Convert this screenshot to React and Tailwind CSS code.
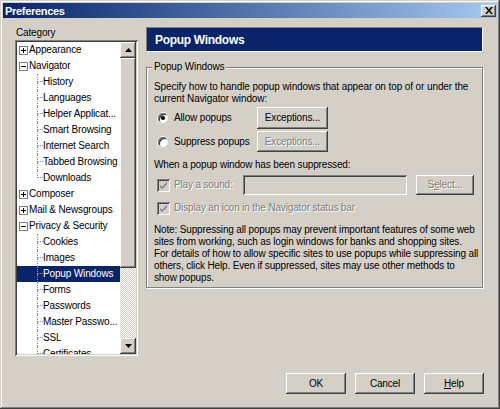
import React from 'react';

const raised =
  'bg-[#d4d0c8] shadow-[inset_-1px_-1px_#404040,inset_1px_1px_#ffffff,inset_-2px_-2px_#808080,inset_2px_2px_#d4d0c8]';
const sunken =
  'shadow-[inset_1px_1px_#808080,inset_-1px_-1px_#ffffff,inset_2px_2px_#404040,inset_-2px_-2px_#d4d0c8]';
const disabledText = 'text-[#808080] [text-shadow:1px_1px_0_#ffffff]';

const tree = [
  { label: 'Appearance', top: 'closed' },
  { label: 'Navigator', top: 'open' },
  { label: 'History' },
  { label: 'Languages' },
  { label: 'Helper Applicat...' },
  { label: 'Smart Browsing' },
  { label: 'Internet Search' },
  { label: 'Tabbed Browsing' },
  { label: 'Downloads', last: true },
  { label: 'Composer', top: 'closed' },
  { label: 'Mail & Newsgroups', top: 'closed' },
  { label: 'Privacy & Security', top: 'open' },
  { label: 'Cookies' },
  { label: 'Images' },
  { label: 'Popup Windows', selected: true },
  { label: 'Forms' },
  { label: 'Passwords' },
  { label: 'Master Passwo...' },
  { label: 'SSL' },
  { label: 'Certificates' },
];

function Twisty({ open }) {
  return (
    <span className="w-[9px] h-[9px] border border-[#808080] bg-white flex items-center justify-center shrink-0">
      <svg width="7" height="7" viewBox="0 0 7 7">
        <path d="M1 3.5h5" stroke="#000" strokeWidth="1" />
        {!open && <path d="M3.5 1v5" stroke="#000" strokeWidth="1" />}
      </svg>
    </span>
  );
}

function TreeRow({ row }) {
  if (row.top) {
    return (
      <div className="h-[16px] flex items-center pl-[2px] whitespace-nowrap">
        <Twisty open={row.top === 'open'} />
        <span className="ml-[1px]">{row.label}</span>
      </div>
    );
  }
  return (
    <div className={`h-[16px] flex items-stretch whitespace-nowrap ${row.selected ? 'bg-[#0a246a] text-white' : ''}`}>
      <div className="w-[20px] shrink-0" />
      <div className="w-[6px] shrink-0 flex flex-col">
        <div className="h-[8px] border-l border-b border-dotted border-[#909090]" />
        <div className={`flex-1 ${row.last ? '' : 'border-l border-dotted border-[#909090]'}`} />
      </div>
      <span className="self-center">{row.label}</span>
    </div>
  );
}

function Arrow({ up }) {
  return (
    <div className={`w-[16px] h-[16px] flex items-center justify-center ${raised}`}>
      <svg width="7" height="4" viewBox="0 0 7 4">
        <path d={up ? 'M3.5 0L7 4H0z' : 'M0 0h7L3.5 4z'} fill="#000" />
      </svg>
    </div>
  );
}

function Button({ children, disabled, className = '' }) {
  return (
    <div className={`flex items-center justify-center ${raised} ${disabled ? disabledText : 'text-black'} ${className}`}>
      {children}
    </div>
  );
}

function Radio({ checked, label }) {
  return (
    <div className="flex items-center pl-[3px] w-[103px]">
      <span className="w-[12px] h-[12px] rounded-full bg-white shadow-[inset_1px_1px_#808080,inset_-1px_-1px_#ffffff,inset_2px_2px_#404040] flex items-center justify-center border border-[#d4d0c8] border-t-transparent border-l-transparent">
        {checked && <span className="w-[4px] h-[4px] rounded-full bg-black" />}
      </span>
      <span className="ml-[5px]">{label}</span>
    </div>
  );
}

function Check({ label }) {
  return (
    <div className="flex items-center pl-[3px]">
      <span className={`w-[13px] h-[13px] bg-[#d4d0c8] flex items-center justify-center ${sunken}`}>
        <svg width="7" height="7" viewBox="0 0 7 7">
          <path d="M0 3l2 2 5-5v2l-5 5-2-2z" fill="#808080" />
        </svg>
      </span>
      <span className={`ml-[4px] ${disabledText}`}>{label}</span>
    </div>
  );
}

export default function App() {
  return (
    <div className="w-[500px] h-[409px] bg-[#d4d0c8] p-[3px] flex flex-col font-['Liberation_Sans',sans-serif] text-[10px] leading-[12px] tracking-[-0.15px] text-black shadow-[inset_-1px_-1px_#404040,inset_1px_1px_#d4d0c8,inset_-2px_-2px_#808080,inset_2px_2px_#ffffff]">
      {/* title bar */}
      <div className="h-[15px] bg-linear-to-r from-[#0a246a] to-[#a6caf0] flex items-center justify-between pl-[2px] pr-[1px]">
        <span className="text-white font-bold text-[11px] tracking-[-0.3px]">Preferences</span>
        <div className={`w-[15px] h-[12px] flex items-center justify-center ${raised}`}>
          <svg width="8" height="7" viewBox="0 0 8 7">
            <path d="M0 0h2l2 2.5L6 0h2L5 3.5 8 7H6L4 4.5 2 7H0l3-3.5z" fill="#000" />
          </svg>
        </div>
      </div>

      {/* body */}
      <div className="flex pl-[12px] pt-[9px] gap-[8px]">
        <div className="w-[123px] flex flex-col">
          <div className="h-[12px] pl-[1px]">Category</div>
          <div className={`mt-[1px] h-[316px] bg-white p-[2px] flex ${sunken}`}>
            <div className="flex-1 overflow-hidden">
              {tree.map((row) => (
                <TreeRow key={row.label} row={row} />
              ))}
            </div>
            <div className="w-[16px] flex flex-col bg-[repeating-conic-gradient(#d4d0c8_0%_25%,#ffffff_0%_50%)] bg-[length:2px_2px]">
              <Arrow up />
              <div className={`h-[210px] ${raised}`} />
              <div className="flex-1" />
              <Arrow />
            </div>
          </div>
        </div>

        <div className="w-[337px] flex flex-col">
          <div className="h-[25px] bg-[#0a246a] border border-[#808080] border-r-white border-b-white flex items-center pl-[8px]">
            <span className="text-white font-bold text-[12px] tracking-[-0.3px]">Popup Windows</span>
          </div>

          <div className="relative mt-[15px] h-[221px] border border-[#808080] shadow-[1px_1px_0_#ffffff,inset_1px_1px_0_#ffffff] pl-[7px] pt-[13px]">
            <span className="absolute -top-[7px] left-[5px] px-[2px] bg-[#d4d0c8]">Popup Windows</span>
            <div className="whitespace-nowrap tracking-[-0.1px]">
              Specify how to handle popup windows that appear on top of or under the
              <br />
              current Navigator window:
            </div>
            <div className="flex items-center mt-[2px]">
              <Radio checked label="Allow popups" />
              <Button className="w-[71px] h-[22px]">Exceptions...</Button>
            </div>
            <div className="flex items-center mt-[2px]">
              <Radio label="Suppress popups" />
              <Button disabled className="w-[71px] h-[21px]">Exceptions...</Button>
            </div>
            <div className="mt-[7px]">When a popup window has been suppressed:</div>
            <div className="flex items-center mt-[4px]">
              <div className="w-[89px]">
                <Check label="Play a sound:" />
              </div>
              <div className={`w-[164px] h-[20px] bg-[#d4d0c8] ${sunken}`} />
              <Button disabled className="ml-[9px] w-[58px] h-[20px]">
                <span>
                  S<span className="underline">e</span>lect...
                </span>
              </Button>
            </div>
            <div className="mt-[6px] h-[14px] flex items-center">
              <Check label="Display an icon in the Navigator status bar" />
            </div>
            <div className="mt-[9px] whitespace-nowrap">
              Note: Suppressing all popups may prevent important features of some web
              <br />
              sites from working, such as login windows for banks and shopping sites.
              <br />
              For details of how to allow specific sites to use popups while suppressing all
              <br />
              others, click Help. Even if suppressed, sites may use other methods to
              <br />
              show popups.
            </div>
          </div>
        </div>
      </div>

      {/* dialog buttons */}
      <div className="flex justify-end gap-[9px] pr-[13px] mt-[17px]">
        <Button className="w-[60px] h-[21px]">OK</Button>
        <Button className="w-[60px] h-[21px]">Cancel</Button>
        <Button className="w-[60px] h-[21px]">
          <span>
            <span className="underline">H</span>elp
          </span>
        </Button>
      </div>
    </div>
  );
}
